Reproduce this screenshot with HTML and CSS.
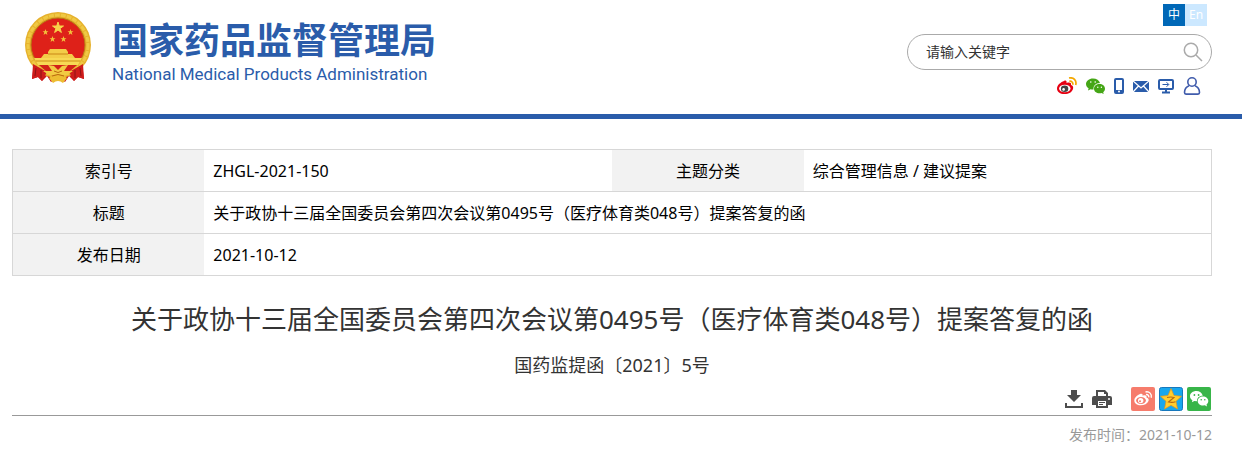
FILE: index.html
```html
<!DOCTYPE html>
<html lang="zh-CN">
<head>
    <meta charset="utf-8" />
    <meta name="viewport" content="width=device-width, initial-scale=1" />
    <title>国家药品监督管理局</title>
    <link rel="stylesheet" href="styles.css">
</head>
<body>
    <header class="header">
        <div class="container header-inner">
            <a href="#" class="logo">
                <svg class="emblem" viewBox="0 0 68 72" aria-hidden="true">
                    <path d="M10 51 L8 67 L14 65 L18 69 L23 64 L27 70 L34 65 L41 70 L45 64 L50 69 L54 65 L60 67 L58 51z" fill="#c9191c"/>
                    <circle cx="34" cy="33" r="33" fill="#e6b12c"/>
                    <circle cx="34" cy="33" r="30" fill="none" stroke="#efc944" stroke-width="3" stroke-dasharray="5 1"/>
                    <circle cx="34" cy="33" r="27" fill="#de2119" stroke="#b97815" stroke-width="1"/>
                    <path d="M9 52L8 67L14 65L18 69L23 60z M59 52L60 67L54 65L50 69L45 60z" fill="#cf1c1b"/>
                    <path d="M12 56l-1 8M17 58l0 8M51 58l0 8M56 56l1 8" stroke="#8e1316" stroke-width="1"/>
                    <path d="M34 10l1.300 4 4.200 0-3.400 2.500 1.300 4-3.400-2.500-3.400 2.500 1.300-4-3.400-2.500 4.200 0z" fill="#f8d34a" stroke="#f8d34a"/>
                    <g fill="#f3c43c">
                        <path id="star" d="M21.500 17l.8 2.200 2.200 0-1.800 1.400.7 2.300-1.900-1.300-1.900 1.300.7-2.300-1.800-1.400 2.200 0z"/>
                        <use href="#star" x="25"/>
                        <use href="#star" x="7" y="7"/>
                        <use href="#star" x="18" y="7"/>
                    </g>
                    <path d="M26 37h16l2 3v2h4l3 4v2H17v-2l3-4h4v-2z" fill="#f3cd48"/>
                    <path d="M24 42h20" stroke="#c98716"/>
                    <path d="M10 46h48l-4 7H14z" fill="#f7d955"/>
                    <path d="M12 49h44" stroke="#cf8d17"/>
                    <path d="M15 53h38L45 60Q34 66 23 60z" fill="#d22119"/>
                    <path d="M24 53l6 1 4 4 4-4 6-1-4 6h9l-6 4h-6l-3 6-3-6h-6l-6-4h9z" fill="#f2ca43"/>
                    <path d="M25 66q9-8 18 0l-4 5q-5-4-10 0z" fill="#edbd32"/>
                    <path d="M30 59q4 3 8 0M28 64q6-3 12 0" fill="none" stroke="#b9680f"/>
                </svg>
                <span class="logo-text">
                    <strong class="logo-cn">国家药品监督管理局</strong>
                    <span class="logo-en">National Medical Products Administration</span>
                </span>
            </a>

            <div class="tools">
                <div class="lang">
                    <a href="#" class="lang-link active">中</a>
                    <a href="#" class="lang-link">En</a>
                </div>
                <form class="search">
                    <input type="text" class="search-field" placeholder="请输入关键字" aria-label="请输入关键字" />
                    <button class="search-button" aria-label="搜索">
                        <svg width="20" height="20" viewBox="0 0 20 20" fill="none" stroke="#aaaaaa" stroke-width="1.500">
                            <circle cx="8" cy="8" r="6.700"/>
                            <path d="M13 13l6 6"/>
                        </svg>
                    </button>
                </form>
                <div class="links">
                    <a href="#" aria-label="微博">
                        <svg width="20" height="18" viewBox="0 0 20 18">
                            <path d="M7 4c2-1 3 0 2.500 2 3-1 5-.5 4.500 2 2 .6 2.500 2 2 4-1 3-4 5-8.500 5C3 17 0 15 0 11.500 0 8 4 5 7 4z" fill="#e60012"/>
                            <ellipse cx="7.800" cy="11.500" rx="5.700" ry="3.800" fill="#fff"/>
                            <ellipse cx="7.600" cy="11.700" rx="3.700" ry="3.200" fill="#444"/>
                            <circle cx="6.600" cy="12.400" r="1.300" fill="#fff"/>
                            <path d="M12 1c4.500-1 8 2.500 6.700 7M12.300 4.300c2.200-.5 4 1.200 3.400 3.400" fill="none" stroke="#f5a800" stroke-width="1.700"/>
                        </svg>
                    </a>
                    <a href="#" aria-label="微信">
                        <svg width="19" height="18" viewBox="0 0 19 18">
                            <path d="M7 1.500c-4 0-7 2.500-7 5.500 0 1.800 1 3.300 2.600 4.300L2 13.500l2.600-1.300c1 .3 2 .3 3 .2C7 9 9.500 6 14 6 13.300 3.300 10.500 1.500 7 1.500z" fill="#45a616"/>
                            <path d="M13.500 7C10.500 7 8 9 8 11.700s2.500 4.600 5.500 4.600c.8 0 1.400-.1 2-.3l2.200 1.100-.5-1.800c1.100-.9 1.800-2.100 1.800-3.600C19 9 16.500 7 13.500 7z" fill="#45a616"/>
                            <g fill="#fff"><circle cx="4.800" cy="5" r=".8"/><circle cx="9.200" cy="5" r=".8"/><circle cx="11.800" cy="10.300" r=".7"/><circle cx="15.400" cy="10.300" r=".7"/></g>
                        </svg>
                    </a>
                    <a href="#" aria-label="移动客户端">
                        <svg width="10" height="18" viewBox="0 0 10 18">
                            <rect x="1" y="2" width="8" height="14" rx="1" fill="none" stroke="#2a5caa" stroke-width="2"/>
                            <path d="M1 13h8v3H1z" fill="#2a5caa"/>
                            <circle cx="5" cy="14.500" r="1" fill="#fff"/>
                        </svg>
                    </a>
                    <a href="#" aria-label="邮箱">
                        <svg width="16" height="18" viewBox="0 0 16 18">
                            <path d="M0 4h16v11H0z" fill="#2a5caa"/>
                            <path d="M0 4l8 7 8-7M0 15l5.500-6M16 15l-5.500-6" fill="none" stroke="#fff" stroke-width="1.300"/>
                        </svg>
                    </a>
                    <a href="#" aria-label="网站">
                        <svg width="16" height="18" viewBox="0 0 16 18" fill="none" stroke="#2a5caa">
                            <rect x="1" y="3" width="14" height="9" rx="1" stroke-width="2"/>
                            <path d="M8 12v3M4 15.500h8" stroke-width="2"/>
                            <path d="M4.500 7.500h6M8.500 5.200l2.300 2.300-2.300 2.300"/>
                        </svg>
                    </a>
                    <a href="#" aria-label="个人中心">
                        <svg width="18" height="18" viewBox="0 0 18 18" fill="none" stroke="#405cac" stroke-width="1.600">
                            <circle cx="9" cy="5" r="4.200"/>
                            <path d="M6 8.700C3 9.800 1.600 12 1.500 15.500c0 1 .5 1.600 1.500 1.600h12c1 0 1.500-.6 1.500-1.600C16.400 12 15 9.800 12 8.700"/>
                        </svg>
                    </a>
                </div>
            </div>
        </div>
    </header>

    <main class="container">
        <table class="info">
            <tr>
                <th scope="row">索引号</th>
                <td>ZHGL-2021-150</td>
                <th scope="row">主题分类</th>
                <td>综合管理信息 / 建议提案</td>
            </tr>
            <tr>
                <th scope="row">标题</th>
                <td colspan="3">关于政协十三届全国委员会第四次会议第0495号（医疗体育类048号）提案答复的函</td>
            </tr>
            <tr>
                <th scope="row">发布日期</th>
                <td colspan="3">2021-10-12</td>
            </tr>
        </table>

        <h1 class="title">关于政协十三届全国委员会第四次会议第0495号（医疗体育类048号）提案答复的函</h1>
        <p class="number">国药监提函〔2021〕5号</p>

        <div class="actions">
            <button class="action" aria-label="下载">
                <svg width="18" height="18" viewBox="0 0 18 18" fill="#4d4d4d">
                    <path d="M6 0h6v5h4l-7 7-7-7h4z"/>
                    <path d="M0 13h2v3h14v-3h2v5H0z"/>
                </svg>
            </button>
            <button class="action" aria-label="打印">
                <svg width="20" height="18" viewBox="0 0 20 18">
                    <path d="M4 0h9l3 3v3h2q2 0 2 2v7h-4v3H4v-3H0V8q0-2 2-2h2z" fill="#4d4d4d"/>
                    <path d="M6 2h6v2h2v2H6zM6 11h8v5H6z" fill="#fff"/>
                    <path d="M7 12.500h6M7 14.500h4" stroke="#4d4d4d"/>
                    <circle cx="17" cy="9" r="1" fill="#fff"/>
                </svg>
            </button>
            <div class="share">
                <a href="#" class="share-link" aria-label="分享到新浪微博">
                    <svg width="24" height="24" viewBox="0 0 24 24">
                        <rect width="24" height="24" rx="2" fill="#f67c6c"/>
                        <path d="M9 7c2-.9 3 .1 2.500 1.800 2.700-1 4.500-.5 4 1.700 2.200.7 2.500 2 2 3.500-1 2.800-4.300 4.300-7.700 4.300-3.800 0-6.500-1.900-6.500-4.800C3.300 10.500 6.500 8 9 7z" fill="#fff"/>
                        <ellipse cx="10" cy="13.500" rx="4.900" ry="3.500" fill="#f67c6c"/>
                        <circle cx="9.700" cy="13.600" r="2.700" fill="#fff"/>
                        <circle cx="9" cy="14.200" r="1" fill="#f67c6c"/>
                        <path d="M14.500 5c3.700-.9 6.700 2 5.700 5.700M15 7.600c1.800-.4 3.200 1 2.700 2.800" fill="none" stroke="#fff" stroke-width="1.400"/>
                    </svg>
                </a>
                <a href="#" class="share-link" aria-label="分享到QQ空间">
                    <svg width="24" height="24" viewBox="0 0 24 24">
                        <rect x=".5" y=".5" width="23" height="23" rx="2" fill="#16a7ee" stroke="#1678bd"/>
                        <path d="M12 1.500l3 7 7.500.8-5.500 5 1.500 7.700-6.500-3.700L5.500 22 7 14.300 1.500 9.300l7.500-.8z" fill="#ffce2e" stroke="#e99516" stroke-width=".7"/>
                        <path d="M8 10.500q4-1 7 0L9.500 15q3.500 1 7-.2" fill="none" stroke="#b66813" stroke-width="1.200"/>
                    </svg>
                </a>
                <a href="#" class="share-link" aria-label="分享到微信">
                    <svg width="24" height="24" viewBox="0 0 24 24">
                        <rect width="24" height="24" rx="2" fill="#38b549"/>
                        <path d="M9.500 4C5.800 4 3 6.200 3 9.200c0 1.700.9 3.100 2.400 4L4.900 15.200l2.400-1.200 2.700.3C9.800 11 12 8.700 15.800 8.700 15 5.800 12.500 4 9.500 4z" fill="#fff"/>
                        <path d="M16 9.500c-3 0-5.300 2-5.300 4.500s2.300 4.500 5.300 4.500l1.800-.3 2.200 1.200-.5-1.900c1.100-.8 1.800-2 1.800-3.500 0-2.500-2.300-4.500-5.300-4.500z" fill="#fff"/>
                        <g fill="#38b549"><circle cx="7.400" cy="8" r=".9"/><circle cx="11.600" cy="8" r=".9"/><circle cx="14.200" cy="12.800" r=".8"/><circle cx="17.800" cy="12.800" r=".8"/></g>
                    </svg>
                </a>
            </div>
        </div>
        <p class="date">发布时间：2021-10-12</p>
    </main>
</body>
</html>
```
FILE: styles.css
```css
* {
    box-sizing: border-box;
}

body {
    margin: 0;
    background: #fff;
    color: #000;
    font: 16px/24px "Noto Sans", "Noto Sans CJK SC", sans-serif;
}

a {
    color: inherit;
    text-decoration: none;
}

svg {
    display: block;
}

button {
    padding: 0;
    border: 0;
    background: none;
    cursor: pointer;
}

.container {
    padding: 0 30px 0 12px;
}

.header {
    border-bottom: 5px solid #2a5caa;
}

.header-inner {
    display: flex;
    justify-content: space-between;
    padding-bottom: 19px;
}

.logo {
    display: flex;
    align-items: flex-start;
    gap: 20px;
    padding: 12px 0 0 12px;
    color: #2a5caa;
}

.emblem {
    width: 68px;
    height: 72px;
}

.logo-text {
    display: flex;
    flex-direction: column;
}

.logo-cn {
    font: bold 36px/52px "Noto Sans CJK SC", sans-serif;
}

.logo-en {
    font: 17px/20px Roboto, sans-serif;
}

/* language, search and quick links */
.tools {
    display: flex;
    flex-direction: column;
    align-items: flex-end;
    gap: 8px;
    padding-top: 4px;
}

.lang {
    display: flex;
    margin-right: 5px;
}

.lang-link {
    width: 22px;
    background: #cce8ff;
    color: #fff;
    font-size: 12px;
    line-height: 22px;
    text-align: center;
}

.lang-link.active {
    background: #0068b7;
}

.search {
    display: flex;
    align-items: center;
    width: 305px;
    height: 36px;
    padding: 0 8px 0 18px;
    border: 1px solid #aaa;
    border-radius: 18px;
}

.search-field {
    flex: 1;
    min-width: 0;
    padding: 0;
    border: 0;
    outline: 0;
    background: none;
    font: 14px/20px "Noto Sans", "Noto Sans CJK SC", sans-serif;
}

.search-field::placeholder {
    color: #333;
    opacity: 1;
}

.links {
    display: flex;
    gap: 9px;
    margin: -1px 11px 0 0;
}

/* document details */
.info {
    width: 100%;
    margin-top: 30px;
    border: 1px solid #d7d7d7;
    border-collapse: collapse;
    table-layout: fixed;
}

.info tr {
    border-bottom: 1px solid #d7d7d7;
}

.info th,
.info td {
    height: 42px;
    padding: 8px 9px;
}

.info th {
    width: 16%;
    background: #f2f2f2;
    font-weight: normal;
    text-align: center;
}

.title {
    margin: 23px 0 0;
    color: #333;
    font-size: 26px;
    font-weight: normal;
    line-height: 40px;
    text-align: center;
}

.number {
    margin: 14px 0 10px;
    color: #333;
    font-size: 18px;
    text-align: center;
}

.actions {
    display: flex;
    justify-content: flex-end;
    align-items: center;
    gap: 9px;
    padding: 0 1px 4px 0;
    border-bottom: 1px solid #999;
}

.share {
    display: flex;
    gap: 4px;
    margin-left: 10px;
}

.date {
    margin: 7px 0 0;
    color: #999;
    font-size: 14px;
    text-align: right;
}
```
